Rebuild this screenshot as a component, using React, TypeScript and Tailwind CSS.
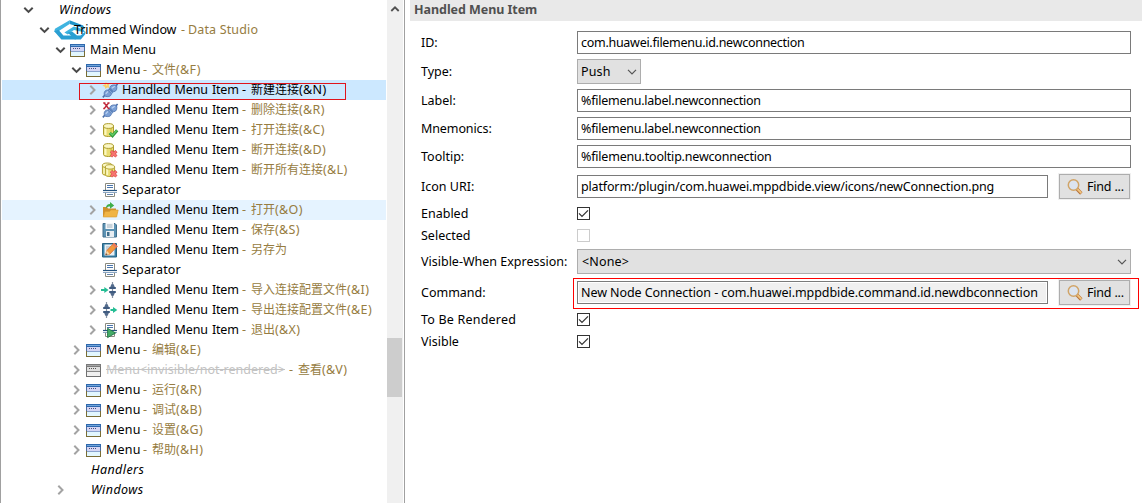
import React from "react";

type IconName =
  | "none" | "logo" | "menu" | "menuOff" | "new" | "delete" | "dbOpen" | "dbClose" | "dbCloseAll"
  | "separator" | "folder" | "save" | "saveAs" | "import" | "export" | "exit";

type TreeRow = {
  level: 0 | 1 | 2 | 3 | 4;
  chevron?: "open" | "closed";
  icon?: IconName;
  text: string;
  width: string;
  tracking?: string;
  suffix?: string;
  cjk?: string;
  key?: string;
  state?: "selected" | "hover";
  italic?: boolean;
  hidden?: boolean;
};

const item = (icon: IconName, cjk: string, key: string, state?: "selected" | "hover"): TreeRow => ({
  level: 4, chevron: "closed", icon, text: "Handled Menu Item", width: "w-[117px]", tracking: "tracking-[-0.16px] [word-spacing:1px]", cjk, key, state,
});
const menu = (cjk: string, key: string, chevron: "open" | "closed" = "closed"): TreeRow => ({
  level: 3, chevron, icon: "menu", text: "Menu", width: "w-[34px]", tracking: "tracking-[0.18px]", cjk, key,
});
const separator: TreeRow = { level: 4, icon: "separator", text: "Separator", width: "w-[60px]", tracking: "tracking-[0.1px]" };

const rows: TreeRow[] = [
  { level: 0, chevron: "open", text: "Windows", width: "w-[60px]", italic: true },
  { level: 1, chevron: "open", icon: "logo", text: "Trimmed Window", width: "w-[104px]", tracking: "tracking-[-0.08px]", suffix: "Data Studio" },
  { level: 2, chevron: "open", icon: "menu", text: "Main Menu", width: "w-[70px]", tracking: "tracking-[-0.05px]" },
  menu("文件", "(&F)", "open"),
  item("new", "新建连接", "(&N)", "selected"),
  item("delete", "删除连接", "(&R)"),
  item("dbOpen", "打开连接", "(&C)"),
  item("dbClose", "断开连接", "(&D)"),
  item("dbCloseAll", "断开所有连接", "(&L)"),
  separator,
  item("folder", "打开", "(&O)", "hover"),
  item("save", "保存", "(&S)"),
  item("saveAs", "另存为", ""),
  separator,
  item("import", "导入连接配置文件", "(&I)"),
  item("export", "导出连接配置文件", "(&E)"),
  item("exit", "退出", "(&X)"),
  menu("编辑", "(&E)"),
  { level: 3, chevron: "closed", icon: "menuOff", text: "Menu<invisible/not-rendered>", width: "w-[180px]", tracking: "tracking-[0.02px]", cjk: "查看", key: "(&V)", hidden: true },
  menu("运行", "(&R)"),
  menu("调试", "(&B)"),
  menu("设置", "(&G)"),
  menu("帮助", "(&H)"),
  { level: 2, text: "Handlers", width: "w-[60px]", italic: true },
  { level: 2, chevron: "closed", text: "Windows", width: "w-[60px]", italic: true },
];

const indents = ["pl-[18px]", "pl-[34px]", "pl-[50px]", "pl-[66px]", "pl-[82px]"];

function Chevron({ kind }: { kind?: "open" | "closed" }) {
  return (
    <svg className="h-4 w-4 shrink-0" viewBox="0 0 16 16" fill="none" strokeWidth="2">
      {kind === "open" && <path d="M4.3 5.7 8.5 9.9 12.7 5.7" stroke="#4a4a4a" />}
      {kind === "closed" && <path d="M6.3 3.8 10.5 8 6.3 12.2" stroke="#a3a3a3" />}
    </svg>
  );
}

function WindowGlyph({ off }: { off?: boolean }) {
  return (
    <>
      <rect x="0.5" y="2.5" width="14" height="12" fill={off ? "#f0f0f0" : "#e2f6fd"} stroke={off ? "#707070" : "#7a6d35"} />
      <path d="M.5 9V2.5h14V9" fill="none" stroke={off ? "#707070" : "#4c6a9c"} />
      <rect x="0" y="2" width="15" height="3" fill={off ? "#7a7a7a" : "#2f68ad"} />
      <rect x="1" y="3" width="13" height="1" fill={off ? "#a5a5a5" : "#6fa5dc"} />
      <rect x="1" y="5" width="13" height="4" fill={off ? "#dedede" : "#d5d5f3"} />
      <path d="M3 6.5h1M5 6.5h1M7 6.5h1M9 6.5h1" stroke={off ? "#555" : "#47527f"} />
      <path d="M1 9.5h13" stroke={off ? "#888" : "#8aa3ce"} />
    </>
  );
}

function Plug() {
  return (
    <>
      <path d="M.8 15.4 3 13M13 5l2.6-3" stroke="#4a6fa9" strokeWidth="1.6" />
      <path d="M2.6 14C1.5 10.5 2.6 8.2 5.6 8l3.8 3.9c-.4 2.6-3.2 3.4-6.8 2.1Z" fill="#7ba0d6" stroke="#4b70ac" strokeWidth=".8" />
      <path d="M7.7 5.8C8.3 3.2 11 2.4 14.5 3.2c1 3.6 0 6.2-2.9 6.6Z" fill="#7ba0d6" stroke="#4b70ac" strokeWidth=".8" />
      <path d="m5.6 7.7 1.9-1.6 4 4-1.7 2Z" fill="#4d76b4" />
      <path d="M3.7 11.8 6 9.3M9.8 6.2l3-2" stroke="#bcd4f3" strokeWidth="1.2" />
      <path d="m6.6 7.4 4 4" stroke="#a4c2ea" strokeWidth=".8" />
    </>
  );
}

function Cylinder() {
  return (
    <>
      <path d="M1.5 4v8.5c0 1.4 2.3 2 5 2s5-.6 5-2V4Z" fill="#e9dc72" stroke="#ad9d2e" />
      <path d="M3.5 6v7" stroke="#fbf8c0" strokeWidth="2" />
      <path d="M9 6v7.5" stroke="#d5c44b" strokeWidth="1.5" />
      <ellipse cx="6.5" cy="4" rx="5" ry="2.4" fill="#fbf7c4" stroke="#ad9d2e" />
    </>
  );
}

const RedCross = () => (
  <>
    <path d="m9 9.2 5.4 5.3M14.4 9.2 9 14.5" stroke="#d94a4a" strokeWidth="3.1" />
    <path d="m9.2 9.4 5 4.9M14.2 9.4l-5 4.9" stroke="#f77570" strokeWidth="2" />
  </>
);

function SheetGlyph() {
  return (
    <>
      <path d="M3.5 8V1.5h9V8" fill="#fff" stroke="#8a8a80" />
      <path d="M5 3.5h6M5 5.5h6" stroke="#4a76ac" />
      <path d="M1 8.5h14" stroke="#24527f" strokeWidth="1.2" />
      <path d="M3.5 11v3.5h9V11" fill="#fff" stroke="#8a8a80" />
      <path d="M1 10.5h14" stroke="#8ba6c4" />
      <path d="M5 12.5h6" stroke="#6684aa" />
    </>
  );
}

function Sliders() {
  return (
    <>
      <path d="M10.5 0v16" stroke="#8592a3" strokeWidth="1.2" />
      <path d="M8 5.8 9.3 2.3h2.4L13 5.8ZM8 10.5h5l-1.3 3.3H9.3Z" fill="#536b8c" />
      <path d="M7.2 6h6.6M7.2 10h6.6" stroke="#3f5b80" strokeWidth="1.8" />
    </>
  );
}

function Icon({ name }: { name: IconName }) {
  const svg = (children: React.ReactNode) => (
    <svg className="h-4 w-4 shrink-0 overflow-visible" viewBox="0 0 16 16" fill="none">{children}</svg>
  );
  switch (name) {
    case "logo":
      return (
        <svg className="h-5 w-4 shrink-0 overflow-visible" viewBox="0 0 16 20" fill="none">
          <path d="M15.6.2V4L6 10.2 2.8 13 .2 11.4 1 8.8Z" fill="#3fb4e0" />
          <path d="M.2 11.2 4.4 9.8l5 5.6H18l3.8 4.2H7.4Z" fill="#2a9fd2" />
          <path d="M15.6.2 29.2 5.6 31 9.4 28.4 8 15.6 4Z" fill="#1f93c8" />
          <path d="M10.4 12.6 19.8 6.6l9.6 2.6 2.2 3.2-3.6-.6-8-1.8-6.2 4.4Z" fill="#3fb4e0" />
          <path d="m13.6 12.4 4.8-.6 4.6 3.8h3.4l5.2-4-.4 2.6-4.4 5.4H21Z" fill="#2a9fd2" />
        </svg>
      );
    case "menu": return svg(<WindowGlyph />);
    case "menuOff": return svg(<WindowGlyph off />);
    case "new": return svg(<><Plug /><path d="m4 0 1.2 2L7.5 1.5 6.7 4l1 2-2.5-.4L3.4 7 2.8 4.8.3 3.8 2.7 2.5Z" fill="#f7ce6a" /><path d="m4 2 .8 1.6" stroke="#fff0a6" /></>);
    case "delete": return svg(<><Plug /><path d="m2.3 1 4.2 5.5M6.5 1 2.3 6.5M1.2 1h2.2M5.4 1h2.2M1.2 6.5h2.2M5.4 6.5h2.2" stroke="#c0283a" strokeWidth="1.4" /></>);
    case "dbOpen": return svg(<><Cylinder /><path d="m7.8 11 2.7 2.8 4.7-5.6" stroke="#2f9a40" strokeWidth="3" /><path d="m8.2 11 2.3 2.3 4.2-4.9" stroke="#66cd64" strokeWidth="1.3" /></>);
    case "dbClose": return svg(<><Cylinder /><RedCross /></>);
    case "dbCloseAll": return svg(<><g transform="translate(-1 -.5) scale(.95)"><Cylinder /></g><g transform="translate(2 1.2) scale(.92)"><Cylinder /></g><RedCross /></>);
    case "separator": return svg(<SheetGlyph />);
    case "folder": return svg(<>
      <path d="M1 14.5V5h4l1 1.5h8V10h1.5l-1.5 4.5Z" fill="#cf8f2c" />
      <path d="M1.2 15 3 9.5h4.5L9 8h7.2l-1.6 7Z" fill="#f0b445" stroke="#d99a30" strokeWidth=".6" />
      <path d="M3.8 6.5C4 3.4 5.6 2.2 8 2.1V0l4.2 3.4L8 6.8V4.5C6.3 4.5 5 5 3.8 6.5Z" fill="#3fae4a" />
    </>);
    case "save": return svg(<>
      <path d="M1 1.5h12l1.5 1.5v12H1Z" fill="#5c93b4" stroke="#416f8c" />
      <rect x="3.5" y="1" width="8.5" height="6" fill="#f4f7f9" />
      <path d="M5 3h5.5M5 5h5.5" stroke="#9cafbc" />
      <rect x="4" y="9" width="8" height="6" fill="#e8eef2" />
      <rect x="5" y="10" width="2.5" height="4" fill="#416f8c" />
    </>);
    case "saveAs": return svg(<>
      <path d="M.5 1.5h14v13.5H.5Z" fill="#3b82aa" stroke="#286484" />
      <rect x="2.5" y="2.5" width="10" height="11" fill="#e8f0f4" />
      <path d="M4 5h5M4 7h3" stroke="#9cafbc" />
      <path d="m3.6 13 1.2-4.4L12 1l3.4 3.2-7.6 8Z" fill="#f29a3e" stroke="#d1632f" strokeWidth=".7" />
      <path d="M12 1l3.4 3.2-1.6 1.7-3.4-3.2Z" fill="#e67a62" />
      <path d="m3.6 13 1.2-4.4 3 3.6Z" fill="#f8d8a5" /><path d="m3.6 13 .6-1.8 1.3 1.3Z" fill="#444" />
    </>);
    case "import": return svg(<><Sliders /><path d="M-1 8h4" stroke="#24bd94" strokeWidth="2" /><path d="M2.3 4.9 6.5 8l-4.2 3.1Z" fill="#24bd94" /></>);
    case "export": return svg(<><g transform="translate(-6 0)"><Sliders /></g><path d="M8.5 8h4" stroke="#24bd94" strokeWidth="2" /><path d="M11 4.9 15.3 8 11 11.1Z" fill="#24bd94" /></>);
    case "exit": return svg(<><SheetGlyph /><path d="M5.6 6.3 13.6 11l-8 4.6Z" fill="#45ad68" stroke="#217544" strokeWidth=".9" /></>);
    default: return <span className="h-4 w-4 shrink-0" />;
  }
}

function Row({ row }: { row: TreeRow }) {
  const bg = row.state === "selected" ? "bg-[#cce8ff]" : row.state === "hover" ? "bg-[#e5f3ff]" : "";
  const tint = row.state === "selected" ? "text-black" : "text-[#967c41]";
  return (
    <div className={`flex h-5 shrink-0 items-center whitespace-nowrap ${indents[row.level]} ${bg}`}>
      <Chevron kind={row.chevron} />
      <span className="ml-[2px] flex h-5 w-5 shrink-0 items-center"><Icon name={row.icon ?? "none"} /></span>
      <span className={`relative shrink-0 ${row.width} ${row.italic ? "pl-px italic tracking-[0.42px]" : row.tracking ?? ""} ${row.hidden ? "text-[#c3c3c3] line-through" : ""}`}>
        {row.text}
      </span>
      {row.suffix && (
        <>
          <span className={`ml-[3px] w-[6px] shrink-0 ${tint}`}>-</span>
          <span className={`ml-px tracking-[0.15px] ${tint}`}>{row.suffix}</span>
        </>
      )}
      {row.cjk && (
        <>
          <span className={`ml-[3px] w-[9px] shrink-0 ${tint}`}>-</span>
          <span className={`text-[12px] ${tint}`}>{row.cjk}</span>
          <span className={`tracking-[0.35px] ${tint}`}>{row.key}</span>
        </>
      )}
    </div>
  );
}

function Field({ children, className = "" }: { children: React.ReactNode; className?: string }) {
  return (
    <div className={`flex h-[23px] items-center border border-[#7a7a7a] pl-[3px] whitespace-nowrap ${className}`}>{children}</div>
  );
}

function Line({ label, className, children }: { label: string; className: string; children: React.ReactNode }) {
  return (
    <div className={`flex items-center pl-[11px] ${className}`}>
      <span className="w-[156px] shrink-0 whitespace-nowrap">{label}</span>
      {children}
    </div>
  );
}

function DownArrow() {
  return (
    <svg className="h-[6px] w-[10px] shrink-0" viewBox="0 0 10 6" fill="none">
      <path d="m1 .8 4 4 4-4" stroke="#555" strokeWidth="1.2" />
    </svg>
  );
}

function Select({ value, className }: { value: string; className: string }) {
  return (
    <div className={`flex h-[25px] items-center justify-between border border-[#adadad] bg-[#e1e1e1] pr-[3px] ${className}`}>
      <span className="tracking-[0.15px]">{value}</span>
      <DownArrow />
    </div>
  );
}

function Check({ on }: { on?: boolean }) {
  return (
    <div className={`h-[13px] w-[13px] border ${on ? "border-[#333]" : "border-[#ccc]"}`}>
      {on && (
        <svg className="h-[11px] w-[11px]" viewBox="0 0 11 11" fill="none">
          <path d="m1 5.4 3 3 6-6" stroke="#333" strokeWidth="1.3" />
        </svg>
      )}
    </div>
  );
}

function FindButton() {
  return (
    <div className="ml-[11px] flex h-[25px] w-[71px] shrink-0 items-center border border-[#adadad] bg-[#e1e1e1] pl-[7px] whitespace-nowrap outline-1 outline-[#f0f0f0]">
      <svg className="h-4 w-4 shrink-0" viewBox="0 0 16 16" fill="none">
        <path d="m10 10 4.3 4.5" stroke="#b9733a" strokeWidth="3.4" />
        <path d="m10.3 10 4 4" stroke="#efc580" strokeWidth="1.8" />
        <circle cx="6.5" cy="6" r="5.2" fill="#dce4f0" stroke="#d1a467" strokeWidth="1.5" />
      </svg>
      <span className="ml-[4px] tracking-[-0.2px]">Find ...</span>
    </div>
  );
}

export default function App() {
  return (
    <div className="flex h-[503px] w-[1146px] overflow-hidden bg-white font-['Noto_Sans','Noto_Sans_CJK_SC',sans-serif] text-[12.5px] leading-5 text-black">
      <div className="relative flex w-[405px] shrink-0 border-x border-[#a0a0a0]">
        <div className="ml-px flex w-[384px] flex-col">
          {rows.map((row, i) => <Row key={i} row={row} />)}
        </div>
        <div className="ml-px flex h-full w-4 shrink-0 flex-col items-center bg-[#f0f0f0]">
          <svg className="mt-[5px] h-[8px] w-[10px]" viewBox="0 0 10 8" fill="none">
            <path d="M1.3 6 5 2.3 8.7 6" stroke="#505050" strokeWidth="1.8" />
          </svg>
          <div className="mt-[325px] h-[59px] w-[15px] self-start bg-[#cdcdcd]" />
        </div>
        <div className="absolute left-[78px] top-[83px] h-[17px] w-[267px] border border-[#e0141c]" />
      </div>

      <div className="ml-[5px] flex w-[732px] flex-col">
        <div className="flex h-[21px] shrink-0 items-center bg-[#e9e9e9] pl-1 pb-[2px] font-bold tracking-[-0.05px] text-[#505050]">Handled Menu Item</div>
        <Line label="ID:" className="mt-[10px] h-[23px]"><Field className="w-[554px] tracking-[-0.28px]">com.huawei.filemenu.id.newconnection</Field></Line>
        <Line label="Type:" className="mt-[5px] h-[25px]"><Select value="Push" className="w-16 pl-[3px]" /></Line>
        <Line label="Label:" className="mt-[5px] h-[23px]"><Field className="w-[554px] tracking-[-0.24px]">%filemenu.label.newconnection</Field></Line>
        <Line label="Mnemonics:" className="mt-[5px] h-[23px] tracking-[-0.1px]"><Field className="w-[554px] tracking-[-0.24px]">%filemenu.label.newconnection</Field></Line>
        <Line label="Tooltip:" className="mt-[5px] h-[23px]"><Field className="w-[554px] tracking-[-0.2px]">%filemenu.tooltip.newconnection</Field></Line>
        <Line label="Icon URI:" className="mt-[6px] h-[25px]">
          <Field className="w-[471px] tracking-[-0.155px]">platform:/plugin/com.huawei.mppdbide.view/icons/newConnection.png</Field>
          <FindButton />
        </Line>
        <Line label="Enabled" className="mt-[8px] h-[13px]"><Check on /></Line>
        <Line label="Selected" className="mt-[9px] h-[13px]"><Check /></Line>
        <Line label="Visible-When Expression:" className="mt-[7px] h-[25px]"><Select value="<None>" className="w-[554px] pl-1" /></Line>
        <Line label="Command:" className="relative mt-[6px] h-[25px]">
          <Field className="w-[471px] bg-[#f0f0f0] tracking-[-0.075px] inset-ring inset-ring-white">New Node Connection - com.huawei.mppdbide.command.id.newdbconnection</Field>
          <FindButton />
          <div className="absolute left-[163px] top-[-2px] h-[31px] w-[566px] border border-[#f00]" />
        </Line>
        <Line label="To Be Rendered" className="mt-[8px] h-[13px] tracking-[0.2px]"><Check on /></Line>
        <Line label="Visible" className="mt-[9px] h-[13px]"><Check on /></Line>
      </div>
    </div>
  );
}
